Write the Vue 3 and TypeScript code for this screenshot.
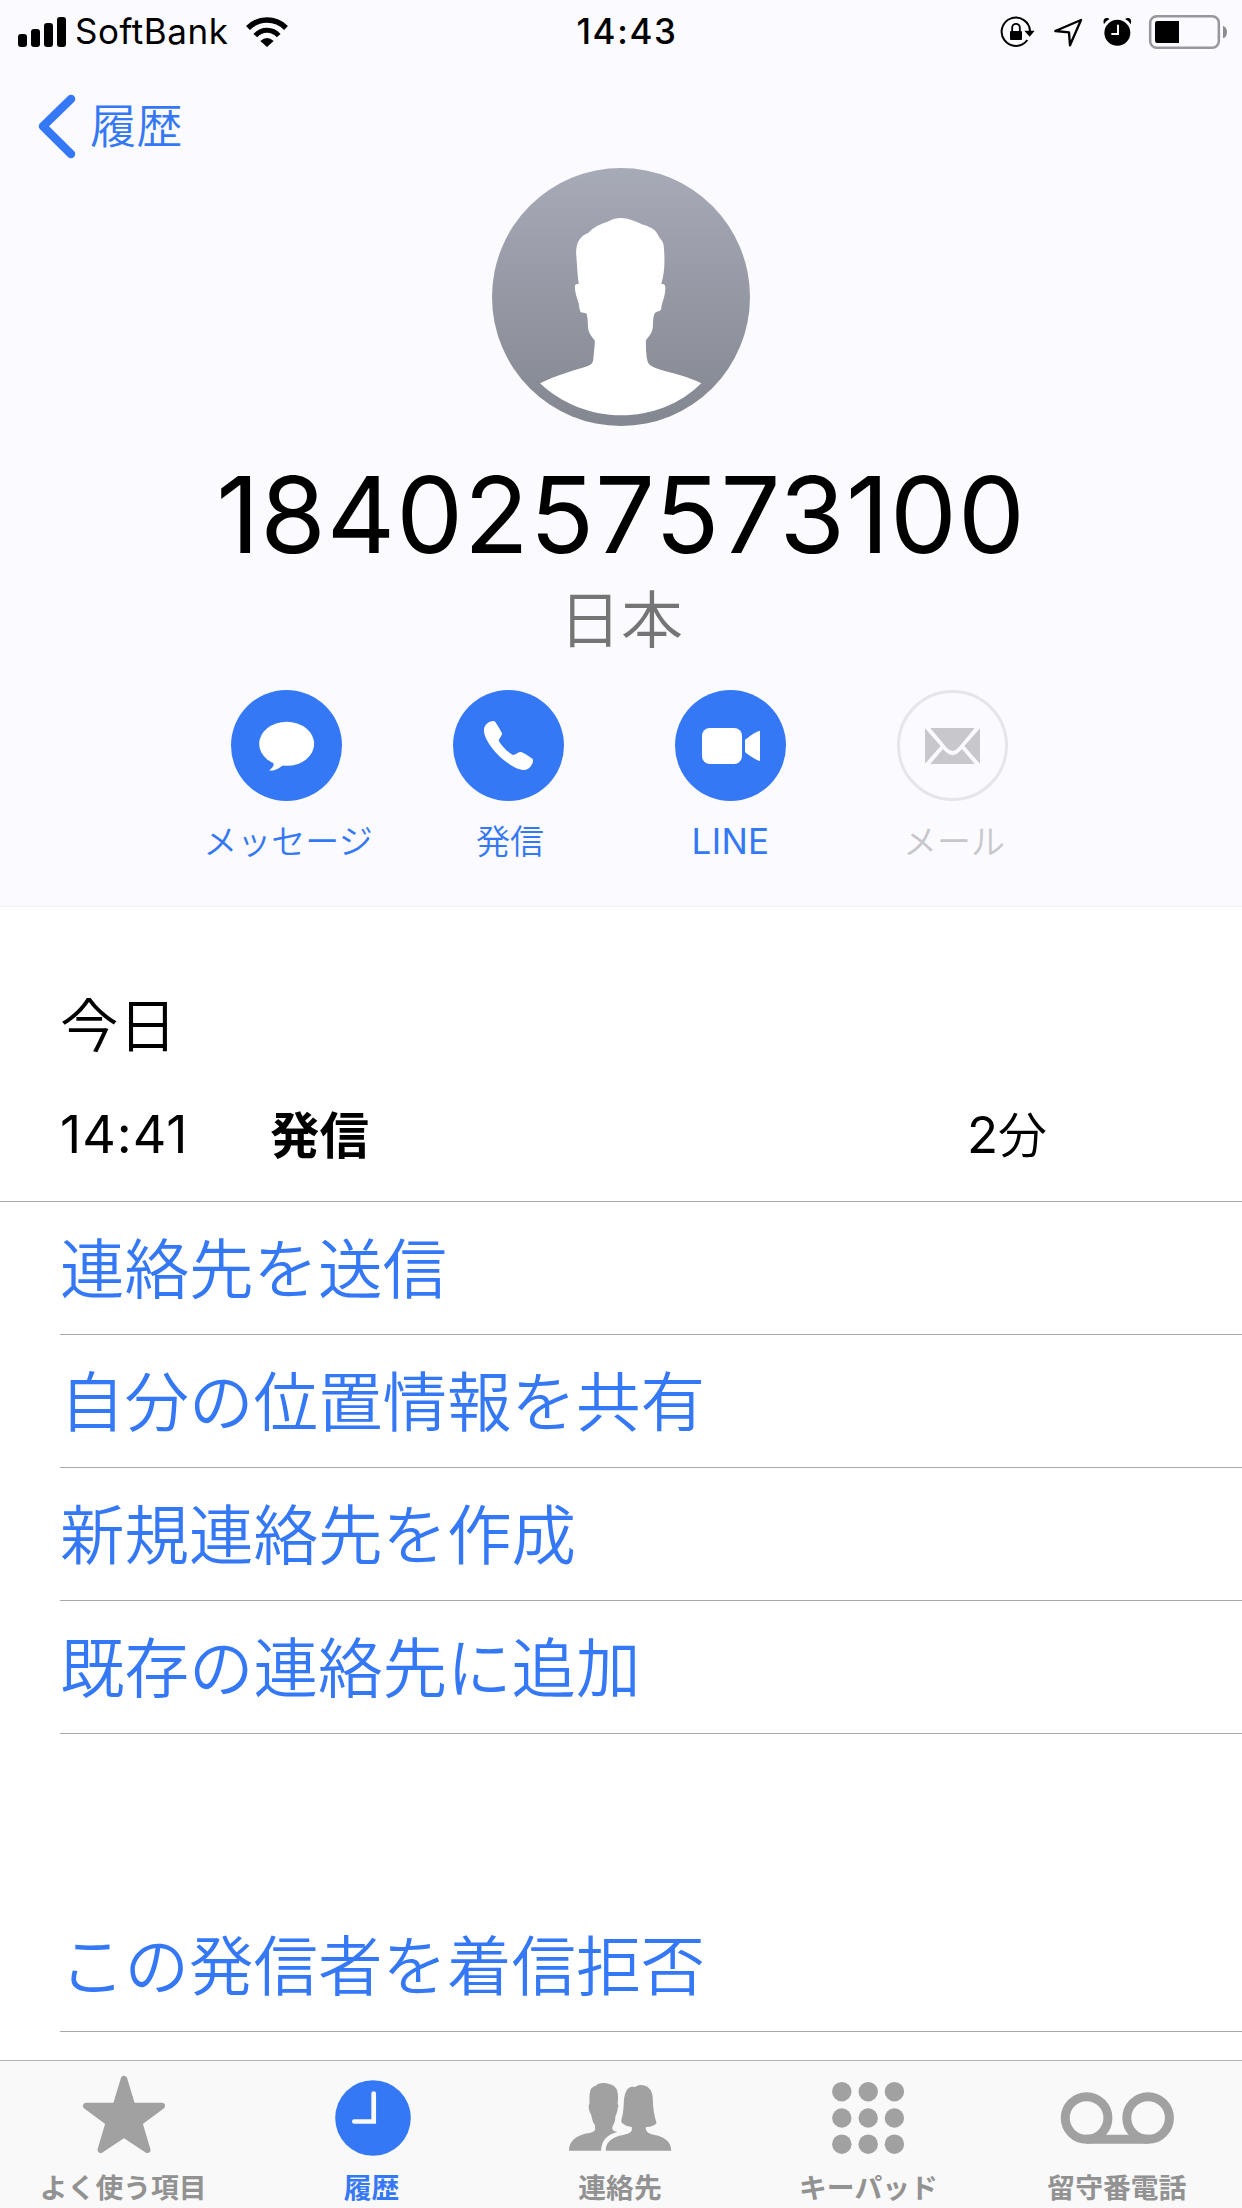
<script setup lang="ts">
interface ContactAction {
  id: 'message' | 'call' | 'video' | 'mail'
  label: string
  enabled: boolean
}

interface Tab {
  id: 'favorites' | 'recents' | 'contacts' | 'keypad' | 'voicemail'
  label: string
  active: boolean
}

const phoneNumber = '1840257573100'

const actions: ContactAction[] = [
  { id: 'message', label: 'メッセージ', enabled: true },
  { id: 'call', label: '発信', enabled: true },
  { id: 'video', label: 'LINE', enabled: true },
  { id: 'mail', label: 'メール', enabled: false },
]

const contactOptions: string[] = [
  '連絡先を送信',
  '自分の位置情報を共有',
  '新規連絡先を作成',
  '既存の連絡先に追加',
]

const tabs: Tab[] = [
  { id: 'favorites', label: 'よく使う項目', active: false },
  { id: 'recents', label: '履歴', active: true },
  { id: 'contacts', label: '連絡先', active: false },
  { id: 'keypad', label: 'キーパッド', active: false },
  { id: 'voicemail', label: '留守番電話', active: false },
]

const keypadColumns = [-27.2, -0.8, 25.4]
const keypadRows = [-26.3, 0, 26.2]
</script>

<template>
  <div class="screen">
    <header class="contact-header">
      <div class="status-bar">
        <div class="status-left">
          <svg class="signal" width="49" height="60" viewBox="0 0 49 60">
            <rect x="0" y="32" width="9" height="13" rx="3" />
            <rect x="13" y="27" width="9" height="18" rx="3" />
            <rect x="26" y="21" width="9" height="24" rx="3" />
            <rect x="39" y="15" width="9" height="30" rx="3" />
          </svg>
          <span class="carrier">SoftBank</span>
          <svg class="wifi" width="44" height="60" viewBox="735 0 132 180" fill="none" stroke="#000">
            <path d="M744 78 A80 80 0 0 1 858 78" stroke-width="16.5" />
            <path d="M766 101 A46 46 0 0 1 836 101" stroke-width="15" />
            <path d="M781 117 Q801 99 821 117 L801 135Z" fill="#000" stroke="none" />
          </svg>
        </div>
        <span class="clock">14:43</span>
        <div class="status-right">
          <svg width="36" height="60" viewBox="60 0 108 180" fill="none" stroke="#000">
            <path d="M150 88 A42.5 42.5 0 1 0 142 114" stroke-width="6" />
            <path d="M133 86 H164 L149 104Z" fill="#000" stroke="none" />
            <rect x="90" y="87" width="36" height="27" rx="3" fill="#000" stroke="none" />
            <path d="M96.500 89 V77 a11.500 11.500 0 0 1 23 0 V89" stroke-width="5.500" />
          </svg>
          <svg class="location" width="32" height="60" viewBox="216 0 96 180" fill="none" stroke="#000">
            <path d="M226 87 L303 54 L270 130 L267 91Z" stroke-width="7" stroke-linejoin="round" />
          </svg>
          <svg class="alarm" width="31" height="60" viewBox="365 0 93 180">
            <circle cx="411" cy="92.500" r="39" />
            <path d="M371 67 C367 54 372 48 379 48 C384 48 387 50 387 52 C380 55 375 60 371 67Z" />
            <path d="M451 67 C455 54 450 48 443 48 C438 48 435 50 435 52 C442 55 447 60 451 67Z" />
            <path d="M413 68 V96 H393" fill="none" stroke="#fbfaff" stroke-width="6" />
          </svg>
          <svg class="battery" width="81" height="60" viewBox="504 0 243 180">
            <rect x="510.500" y="42.500" width="206" height="95" rx="20" fill="none" stroke="#98979b" stroke-width="7.500" />
            <path d="M532 57 H597 V123 H532 Q525 123 525 116 V64 Q525 57 532 57Z" />
            <path d="M729 71 C745 77 745 103 729 109Z" fill="#8d8c90" />
          </svg>
        </div>
      </div>

      <nav class="nav-bar">
        <svg width="41" height="68" viewBox="36 92 41 68" fill="none">
          <path d="M71 99 L43 126.300 L71 154" stroke="#3478f6" stroke-width="8.500" stroke-linecap="round" stroke-linejoin="round" />
        </svg>
        <span class="back-label">履歴</span>
      </nav>

      <svg class="avatar" width="258" height="258" viewBox="37 24 773 773">
        <defs>
          <linearGradient id="avatar-fill" x1="0" y1="0" x2="0" y2="1">
            <stop offset="0" stop-color="#a7aab7" />
            <stop offset="1" stop-color="#838790" />
          </linearGradient>
        </defs>
        <circle cx="423.500" cy="410.500" r="386.500" fill="url(#avatar-fill)" />
        <path
          fill="#fff"
          d="M423 174 C445 174 465 184 488 193 C510 200 525 206 532 220 C540 238 551 240 552 262 C555 300 555 335 544 372 C556 370 557 378 556 390 C554 415 546 425 544 445 C542 455 535 451 527 457 C520 462 520 480 519 500 C518 520 505 530 498 541 C498 565 499 590 504 606 C515 632 590 632 664 669 C600 732 515 765 423 765 C335 765 245 730 181 669 C235 642 280 632 322 618 C338 612 340 606 341 590 C343 570 345 555 345 541 C335 528 326 518 325 505 C324 490 324 465 319 459 C305 457 302 460 299 445 C298 425 290 415 286 390 C284 375 286 370 297 372 C292 340 292 310 289 280 C289 245 302 228 325 219 C345 198 360 193 385 184 C400 177 410 174 423 174Z"
        />
      </svg>

      <h1 class="number">{{ phoneNumber }}</h1>
      <p class="region">日本</p>

      <div class="actions">
        <div
          v-for="action in actions"
          :key="action.id"
          class="action"
          :class="[`action-${action.id}`, { disabled: !action.enabled }]"
        >
          <svg v-if="action.id === 'message'" width="111" height="111" viewBox="123 60 333 333">
            <circle cx="289.500" cy="226.500" r="166.500" fill="#3478f6" />
            <ellipse cx="290" cy="221.500" rx="82.500" ry="66" fill="#fff" />
            <path d="M250 278 C254 288 245 295 237 301 C252 304 268 295 280 284Z" fill="#fff" />
          </svg>
          <svg v-else-if="action.id === 'call'" width="111" height="111" viewBox="789 60 333 333">
            <circle cx="955.500" cy="226.500" r="166.500" fill="#3478f6" />
            <path
              fill="#fff"
              d="M882 183 C880 161 903 151 913 153 C920 160 932 182 936 189 C937 198 927 205 926 212 C935 228 952 245 969 255 C978 254 984 244 993 246 C1003 249 1018 260 1028 267 C1033 278 1018 300 1003 300 C960 300 884 225 882 183Z"
            />
          </svg>
          <svg v-else-if="action.id === 'video'" width="111" height="111" viewBox="165 60 333 333">
            <circle cx="331.500" cy="226.500" r="166.500" fill="#3478f6" />
            <rect x="246" y="174" width="120" height="108" rx="23" fill="#fff" />
            <path d="M375 210 C388 198 405 186 420 182 V273 C405 269 388 257 375 246Z" fill="#fff" />
          </svg>
          <svg v-else width="111" height="111" viewBox="831 60 333 333">
            <circle cx="997.500" cy="226.500" r="162" fill="none" stroke="#e5e5ea" stroke-width="9" />
            <g fill="#c7c7cc">
              <path d="M915 175 L962 228 L915 281Z" />
              <path d="M1080 175 L1033 228 L1080 281Z" />
              <path d="M931 174 H1064 L1016 232 Q998 254 979 232Z" />
              <path d="M931 282 L969 237 L977 245 Q998 266 1018 245 L1026 237 L1064 282Z" />
            </g>
          </svg>
          <span class="action-label">{{ action.label }}</span>
        </div>
      </div>
    </header>

    <section class="call-log">
      <h2 class="day">今日</h2>
      <div class="call-entry">
        <span class="call-time">14:41</span>
        <span class="call-kind">発信</span>
        <span class="call-length">2<span class="unit">分</span></span>
      </div>
    </section>

    <ul class="options">
      <li v-for="option in contactOptions" :key="option" class="option">{{ option }}</li>
    </ul>
    <ul class="options block-options">
      <li class="option">この発信者を着信拒否</li>
    </ul>

    <footer class="tab-bar">
      <div v-for="tab in tabs" :key="tab.id" class="tab" :class="{ active: tab.active }">
        <svg width="120" height="106" viewBox="-60 -57 120 106" fill="currentColor">
          <path
            v-if="tab.id === 'favorites'"
            d="M0 -39 L8.200 -12 H37.800 L15.200 4.700 L23.300 31.800 L0 16.300 L-23.300 31.800 L-15.200 4.700 L-37.800 -12 H-8.200Z"
            stroke="currentColor"
            stroke-width="6.400"
            stroke-linejoin="round"
          />
          <template v-else-if="tab.id === 'recents'">
            <circle cx="0" cy="0" r="37.800" />
            <path d="M0.700 -24.500 V3.500 H-18.700" fill="none" stroke="#f9f9f9" stroke-width="4.700" stroke-linecap="round" />
          </template>
          <template v-else-if="tab.id === 'contacts'">
            <path
              d="M-18.300 -35 C-21 -35 -24 -34 -25 -32.300 C-28 -31.500 -30.400 -30 -31 -26 C-31.800 -22 -31.500 -18 -31.500 -14 C-33 -13 -32 -8 -31 -5.500 C-30 -4 -29.500 -2 -29.100 0 C-28.500 4 -27 5.500 -25.900 7.300 V12 C-29 16 -36 14.500 -42 18 C-49 21.500 -52 26 -52 32.700 H-20 C-19.500 22 -13 16 -3.500 14 C-6 13.500 -7.500 13 -8.500 11.500 C-9.300 9.500 -8 7.500 -7.300 6 C-6 4 -5.800 1 -5.600 -1.500 C-4.500 -4 -3.500 -7 -3.200 -10 C-2.300 -11.500 -2.600 -13 -3.400 -14.500 C-2.700 -19 -2.700 -24 -4 -28 C-6 -33 -12 -35 -18.300 -35Z"
            />
            <path
              d="M19.700 -33 C17 -33 15.500 -32 14 -30.800 C12 -31.200 10 -31.500 8.500 -30.500 C4.500 -28 3.300 -22 2.900 -17 C2.500 -10 2.500 -5 0.200 2.500 C0 5 4 8 10.800 9 C11 11 11 12.500 9.900 13.700 C7 17 -2 16.500 -8 20.500 C-13 23.500 -15.200 27 -15.200 32.700 H50.200 C50.200 27 47.500 22.500 42.100 19.700 C36 16.500 28.500 17 26 13.500 C25 12.500 24.700 11 24.700 9.300 C30 9 36 6.500 35.400 4.500 C32.500 -5 32 -12 31.800 -19 C31.700 -28 27 -33 19.700 -33Z"
            />
          </template>
          <template v-else-if="tab.id === 'keypad'">
            <template v-for="cy in keypadRows" :key="cy">
              <circle v-for="cx in keypadColumns" :key="cx" :cx="cx" :cy="cy" r="9.700" />
            </template>
          </template>
          <g v-else fill="none" stroke="currentColor" stroke-width="9">
            <circle cx="-31.400" cy="0" r="21.300" />
            <circle cx="30.100" cy="0" r="21.300" />
            <path d="M-31.400 21.300 H30.100" />
          </g>
        </svg>
        <span class="tab-label">{{ tab.label }}</span>
      </div>
    </footer>
  </div>
</template>

<style>
body {
  margin: 0;
  background: #fff;
}
</style>

<style scoped>
.screen {
  display: flex;
  flex-direction: column;
  width: 1242px;
  height: 2208px;
  overflow: hidden;
  background: #fff;
  color: #000;
  font-family: Inter, "Noto Sans CJK JP", sans-serif;
  white-space: nowrap;
}

svg {
  display: block;
  flex: none;
}

h1,
h2,
p,
ul {
  margin: 0;
  padding: 0;
  font-weight: 400;
  list-style: none;
}

.contact-header {
  box-sizing: border-box;
  display: flex;
  flex-direction: column;
  align-items: center;
  height: 907px;
  background: #fbfaff;
  border-bottom: 1px solid #efeff4;
}

.status-bar {
  box-sizing: border-box;
  display: grid;
  grid-template-columns: 1fr auto 1fr;
  align-items: center;
  width: 100%;
  height: 60px;
  padding: 0 13px 0 18px;
}

.status-left,
.status-right {
  display: flex;
  align-items: center;
}

.status-right {
  justify-content: flex-end;
}

.carrier {
  width: 170px;
  margin-left: 8px;
  font-size: 35px;
  line-height: 63px;
  letter-spacing: 0.55px;
}

.clock {
  padding-left: 7px;
  font-size: 35px;
  font-weight: 550;
  line-height: 63px;
  letter-spacing: 1.6px;
}

.location {
  margin-left: 16px;
}

.alarm {
  margin-left: 18px;
}

.battery {
  margin-left: 15px;
}

.nav-bar {
  box-sizing: border-box;
  display: flex;
  align-items: center;
  width: 100%;
  height: 108px;
  padding: 24px 0 0 36px;
  color: #3478f6;
}

.back-label {
  margin-left: 13px;
  font-size: 46.3px;
  font-weight: 350;
  line-height: 60px;
}

.number {
  margin-top: 29px;
  font-size: 106px;
  line-height: 120px;
  letter-spacing: 0.95px;
}

.region {
  margin-top: 6px;
  color: #757575;
  font-size: 62px;
  font-weight: 350;
  line-height: 80px;
}

.actions {
  display: flex;
  justify-content: center;
  margin-top: 29px;
}

.action {
  display: flex;
  flex-direction: column;
  align-items: center;
  width: 222px;
  color: #3478f6;
}

.action svg {
  margin-right: 3px;
}

.action.disabled {
  color: #c7c7cc;
}

.action-label {
  margin-top: 19px;
  font-size: 34px;
  font-weight: 350;
  line-height: 44px;
}

.action-video .action-label {
  margin-right: 3px;
  font-size: 35px;
  font-weight: 400;
  line-height: 43px;
  letter-spacing: 0.3px;
}

.call-log {
  box-sizing: border-box;
  height: 295px;
  padding: 87px 0 0 60px;
  border-bottom: 1px solid #a9a9ab;
}

.day {
  font-size: 58.5px;
  font-weight: 350;
  line-height: 64px;
}

.call-entry {
  display: grid;
  grid-template-columns: 210px 697px auto;
  margin-top: 47px;
  font-size: 52px;
  line-height: 60px;
}

.call-time {
  letter-spacing: 1px;
}

.call-kind {
  font-size: 49.5px;
  font-weight: 700;
  line-height: 62px;
}

.call-length {
  font-size: 51px;
}

.unit {
  font-size: 49px;
  font-weight: 350;
}

.options {
  padding-left: 60px;
}

.block-options {
  margin-top: 165px;
}

.option {
  height: 132px;
  border-bottom: 1px solid #a9a9ab;
  color: #3478f6;
  font-size: 64.5px;
  font-weight: 350;
  line-height: 137px;
}

.tab-bar {
  display: flex;
  height: 147px;
  margin-top: auto;
  background: #f9f9f9;
  border-top: 1px solid #b2b2b2;
}

.tab {
  display: flex;
  flex: 1;
  flex-direction: column;
  align-items: center;
  color: #a1a1a1;
}

.tab-label {
  margin-right: 2px;
  color: #929292;
  font-size: 27.8px;
  font-weight: 700;
  line-height: 43px;
}

.tab.active,
.tab.active .tab-label {
  color: #3478f6;
}
</style>
